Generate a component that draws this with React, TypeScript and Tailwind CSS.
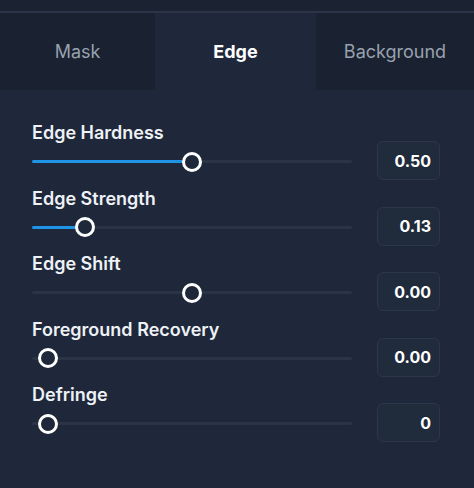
import React from "react";

type Row = { label: string; value: string; pos: number };

const rows: Row[] = [
  { label: "Edge Hardness", value: "0.50", pos: 0.5 },
  { label: "Edge Strength", value: "0.13", pos: 0.13 },
  { label: "Edge Shift", value: "0.00", pos: 0.5 },
  { label: "Foreground Recovery", value: "0.00", pos: 0 },
  { label: "Defringe", value: "0", pos: 0 },
];

function Slider({ pos, filled }: { pos: number; filled: boolean }) {
  const center = 16 + pos * 288;
  return (
    <div className="relative h-[37px] w-[320px]">
      <div className="absolute left-0 right-0 top-[17px] h-[3px] rounded-full bg-[#2a3445]" />
      {filled && (
        <div
          className="absolute left-0 top-[17px] h-[3px] rounded-full bg-[#1f93e6]"
          style={{ width: center }}
        />
      )}
      <div
        className="absolute top-[8.5px] h-[20px] w-[20px] rounded-full border-[3px] border-white bg-[#1e283a]"
        style={{ left: center - 10 }}
      />
    </div>
  );
}

export default function App() {
  return (
    <div
      className="flex h-[488px] w-[474px] flex-col bg-[#1e283a]"
      style={{ fontFamily: "Inter, 'Open Sans', sans-serif" }}
    >
      <div className="h-[11px] bg-[#1b2231]" />
      <div className="h-[2px] bg-[#2b3547]" />
      <div className="flex h-[77px] text-[18px]">
        <div className="flex w-[155px] items-center justify-center bg-[#1a2130] text-[#98a1ae]">
          Mask
        </div>
        <div className="flex w-[161px] items-center justify-center bg-[#1e283a] font-bold text-white">
          Edge
        </div>
        <div className="flex flex-1 items-center justify-center bg-[#1a2130] text-[#98a1ae]">
          Background
        </div>
      </div>
      <div className="flex flex-col gap-[8.5px] pl-[32px] pt-[33px]">
        {rows.map((r, i) => (
          <div key={i} className="flex items-end">
            <div className="flex flex-col">
              <div className="h-[20px] text-[18px] font-semibold leading-[20px] text-[#eef1f5]">
                {r.label}
              </div>
              <Slider pos={r.pos} filled={i < 2} />
            </div>
            <div className="ml-[25px] flex h-[39px] w-[63px] items-center justify-end rounded-[6px] border border-[#2c3749] bg-[#202b3c] pr-[8px] text-[16px] font-bold text-white">
              {r.value}
            </div>
          </div>
        ))}
      </div>
    </div>
  );
}
